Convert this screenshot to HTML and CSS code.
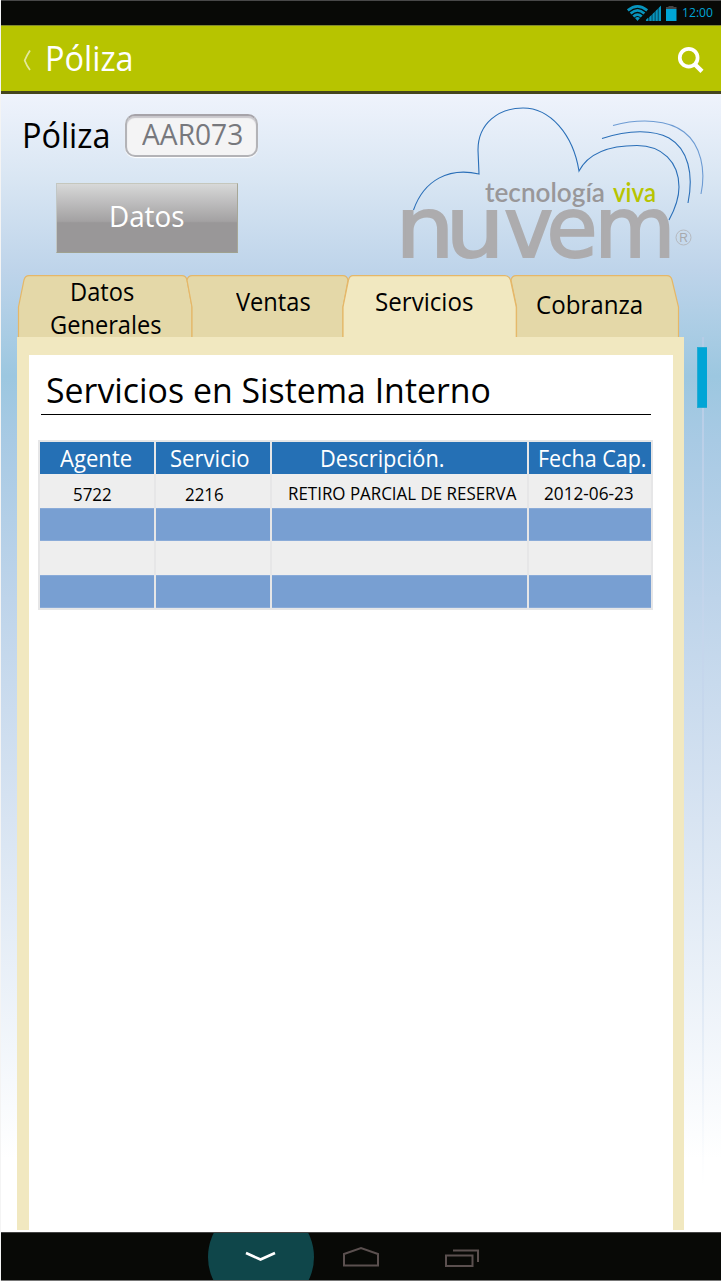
FILE: index.html
```html
<!DOCTYPE html>
<html lang="es">
<head>
<meta charset="utf-8">
<title>Póliza</title>
<link rel="stylesheet" href="styles.css">
</head>
<body>
<div class="screen">
  <header class="status">
    <svg class="status-icons" width="56" height="18" viewBox="0 0 56 18">
      <g fill="none" stroke="#0794bd" stroke-width="2.700">
        <path d="M0.8 5.4Q10.5-2.600 20.2 5.4"/>
        <path d="M3.6 8.5Q10.5 2.3 17.4 8.5"/>
        <path d="M6.3 11.5Q10.5 7.6 14.7 11.5"/>
      </g>
      <path d="M8 13Q10.5 11.2 13 13L10.5 16Z" fill="#0794bd"/>
      <path d="M18.5 16L34 .5V16Z" fill="#064d63"/>
      <path d="M19 16v-1.2l2-2V16zM22.5 16v-4l2-2v6zM25.6 16V9l2-2v9zM28.7 16V6l2-2v12zM31.8 16V3L34 .7V16z" fill="#0794bd"/>
      <path d="M41.5 1h5v2h-5zM39 2h10.500v2H39z" fill="#464646"/>
      <path d="M39 4h10.500v12H39z" fill="#00a5d6"/>
    </svg>
    <span class="txt clock">12:00</span>
  </header>
  <div class="appbar">
    <svg width="10" height="22" viewBox="0 0 10 22"><path d="M8 0.500Q5 5 2.700 10.500Q5 16.500 8 20" fill="none" stroke="#e3e89c" stroke-width="1.800"/></svg>
    <h1 class="txt app-title">Póliza</h1>
    <svg class="search" width="28" height="28" viewBox="0 0 28 28"><circle cx="11.700" cy="11.700" r="8.900" fill="none" stroke="#fff" stroke-width="3.700"/><path d="M17.500 18L25 25.300" stroke="#fff" stroke-width="4.400"/></svg>
  </div>
  <main class="content">
    <section class="summary">
      <div class="policy">
        <div class="policy-row">
          <label class="txt policy-label">Póliza</label>
          <div class="field"><span class="txt field-value">AAR073</span></div>
        </div>
        <button class="btn"><span class="txt btn-label">Datos</span></button>
      </div>
      <svg class="logo" width="310" height="165" viewBox="400 100 310 165">
        <g fill="none" stroke="#2a6fb8" stroke-width="1.100">
          <path d="M413.500 210C424 180 449 167 479 174L478 150C478 123 499 108 523 108C550 108 573 134 579 171C589 152 611 145.500 637 145.500C662 145.500 679 162 679 187C679 199 675 209 669 220"/>
          <path d="M602 138.500C630 129 654 130 669 138C688 149 694 174 688 203"/>
          <path d="M613 125.500C641 118 669 120 684 132C701 145 706 170 701 194" stroke="#6d9bd3"/>
        </g>
        <text class="tagline" x="485" y="202" textLength="120" lengthAdjust="spacingAndGlyphs">tecnología</text>
        <text class="tagline lime" x="613" y="202" textLength="43" lengthAdjust="spacingAndGlyphs">viva</text>
        <text class="brand" y="257"><tspan x="395.500" textLength="59" lengthAdjust="spacingAndGlyphs">n</tspan><tspan x="445.500" textLength="59" lengthAdjust="spacingAndGlyphs">u</tspan><tspan x="504">v</tspan><tspan x="546.500">e</tspan><tspan x="594.500">m</tspan></text>
        <circle cx="683.500" cy="237.500" r="7.500" fill="none" stroke="#b0b0b2" stroke-width=".8"/>
        <text class="reg" x="683.700" y="242">R</text>
      </svg>
    </section>
    <nav class="tabs">
      <svg class="tab-shapes" width="667" height="62" viewBox="17 275 667 62">
        <g fill="#e4d8a8" stroke="#e5b768" stroke-width="1.200">
          <path d="M18.500 338V307L24 280Q25 275.700 29 275.700H182Q186 275.700 187 280L192 307V338"/>
          <path d="M192 338V307L187 280Q188 275.700 192 275.700H343Q347 275.700 348 280L343 307V338"/>
          <path d="M516.500 338V307L511 280Q512 275.700 516 275.700H667Q671 275.700 672 280L678.500 307V338"/>
          <path fill="#f1e8c0" d="M343 338V307L348.500 280Q349.500 275.700 353 275.700H505Q509 275.700 510.500 280L516.300 307V338"/>
        </g>
      </svg>
      <a class="tab tab-general"><span class="txt">Datos</span><span class="txt">Generales</span></a>
      <a class="tab tab-sales"><span class="txt">Ventas</span></a>
      <a class="tab tab-services"><span class="txt">Servicios</span></a>
      <a class="tab tab-billing"><span class="txt">Cobranza</span></a>
    </nav>
    <div class="body-row">
      <section class="panel">
        <div class="sheet">
          <div class="heading"><h2 class="txt">Servicios en Sistema Interno</h2></div>
          <div class="table">
            <div class="row head">
              <div class="c1"><span class="txt">Agente</span></div><div class="c2"><span class="txt">Servicio</span></div><div class="c3"><span class="txt">Descripción.</span></div><div class="c4"><span class="txt">Fecha Cap.</span></div>
            </div>
            <div class="row data">
              <div class="c1"><span class="txt">5722</span></div><div class="c2"><span class="txt">2216</span></div><div class="c3"><span class="txt">RETIRO PARCIAL DE RESERVA</span></div><div class="c4"><span class="txt">2012-06-23</span></div>
            </div>
            <div class="row blue"><div></div><div></div><div></div><div></div></div>
            <div class="row"><div></div><div></div><div></div><div></div></div>
            <div class="row blue"><div></div><div></div><div></div><div></div></div>
          </div>
        </div>
      </section>
      <div class="scroll"><div class="thumb"></div></div>
    </div>
  </main>
  <footer class="navbar">
    <div class="nav-back"><svg width="32" height="12" viewBox="0 0 32 12"><path d="M1 2L15.500 8.500L30 2" fill="none" stroke="#fff" stroke-width="2.600"/></svg></div>
    <svg class="nav-home" width="38" height="22" viewBox="0 0 38 22"><path d="M2 19.500V8L19 2L36 8V19.500Z" fill="none" stroke="#5b504f" stroke-width="2"/></svg>
    <svg class="nav-recent" width="36" height="20" viewBox="0 0 36 20"><path d="M2 7.500H28.500V18H2ZM9 2.500H34V14" fill="none" stroke="#5b504f" stroke-width="2"/></svg>
  </footer>
</div>
</body>
</html>
```
FILE: styles.css
```css
* { box-sizing: border-box; }
body { margin: 0; background: #f4f4f4; font-family: "Open Sans", "Noto Sans", sans-serif; color: #000; }
h1, h2 { margin: 0; font-weight: 400; }
svg { display: block; flex: none; }
.screen { width: 721px; height: 1281px; padding-left: 1px; display: flex; flex-direction: column; overflow: hidden; }
.txt { display: block; white-space: nowrap; transform: scaleX(.94); transform-origin: 0 50%; }

.status { height: 25px; flex: none; background: #080906; border-top: 1px solid #484848; display: flex; padding-left: 626px; }
.status-icons { margin-top: 4px; }
.clock { color: #00a5d6; font-size: 13.5px; line-height: 22px; width: 36px; margin-left: -1px; transform: scaleX(.9); }

.appbar { height: 69px; flex: none; background: #b7c400; border-top: 1px solid #81882c; border-bottom: 3px solid #45451d; display: flex; padding-left: 21px; color: #fff; }
.appbar > svg:first-child { margin-top: 24px; }
.app-title { width: 110px; margin: 8px 0 0 13px; font-size: 34.5px; line-height: 48px; }
.search { margin: 20px 16px 0 auto; }

.content { flex: 1; min-height: 0; display: flex; flex-direction: column;
  background: linear-gradient(#eff3fc 0, #d9e6f3 85px, #bed4ea 176px, #9cc7e0 282px, #a8cae4 346px, #bed4ea 505px, #d5e2f1 700px, #fff 1065px); }
.summary { height: 181px; flex: none; display: flex; justify-content: space-between; padding: 6px 11px 0 21px; }
.policy { width: 240px; }
.policy-row { display: flex; padding-top: 14px; }
.policy-label { width: 105px; margin-left: -2px; padding-left: 2px; font-size: 34.5px; line-height: 41px; }
.field { width: 133px; height: 43px; border: 2px solid #b3b3b7; border-top-color: #a6a3a9; border-radius: 10px; background: #f4f4f5; box-shadow: inset 0 2px 1px #c9c7cc, 0 1px 1px #fff; padding-left: 15px; }
.field-value { color: #77787d; font-size: 29.500px; line-height: 36px; transform: scaleX(.955); }
.btn { display: block; width: 182px; height: 70px; margin: 26px 0 0 34px; padding: 0 0 4px 52px; border: 1px solid; border-color: #c5c7bd #a7a797 #9fa18f #c2c7c5; background: linear-gradient(#d7d8d8 0, #a3a1a2 55%, #999798 57%); color: #fff; font: inherit; text-align: left; }
.btn-label { font-size: 28.500px; line-height: 62px; transform: scaleX(.975); }
.logo { overflow: visible; }
.tagline { font: 600 26.5px Lato, sans-serif; fill: #999799; }
.tagline.lime { fill: #b7c400; }
.brand { font: 83px "DejaVu Sans", sans-serif; fill: #adacae; stroke: #adacae; stroke-width: 2px; }
.reg { font: 12px "Liberation Sans", sans-serif; fill: #a7a9ad; text-anchor: middle; }

.tabs { position: relative; height: 62px; flex: none; width: 667px; margin-left: 16px; display: flex; font-size: 25px; line-height: 33px; }
.tab-shapes { position: absolute; left: 0; top: 0; }
.tab { position: relative; }
.tab .txt { transform: scaleX(.945); }
.tab-general { width: 175px; padding: 0 0 0 33px; }
.tab-general .txt:first-child { margin-left: 20px; }
.tab-sales { width: 151px; padding: 10px 0 0 44px; }
.tab-services { width: 173px; padding: 10px 0 0 32px; }
.tab-billing { padding: 13px 0 0 20px; }
.tab-services .txt, .tab-billing .txt { transform: scaleX(.965); }

.body-row { flex: 1; display: flex; padding: 0 13px 2px 16px; }
.panel { width: 667px; background: #f1e8c0; padding: 18px 11px 0 12px; }
.sheet { height: 100%; background: #fff; padding: 0 20px 0 9px; }
.heading { width: 610px; height: 60px; margin-left: 3px; border-bottom: 1px solid #000; padding: 8px 0 0 5px; }
.heading h2 { font-size: 35px; line-height: 54px; transform: scaleX(.967); }

.table { width: 615px; margin-top: 25px; border: 2px solid #e6e6e7; background: #e6e6e7; }
.row { height: 34px; display: grid; grid-template-columns: 114px 114px 255px 122px; column-gap: 2px; background: #e6e6e7; }
.row > div { background: #eee; }
.row.head { height: 32px; }
.row.blue { height: 33px; }
.row.head > div { background: #2570b5; color: #fff; font-size: 23px; line-height: 33px; }
.row.blue > div { background: #789fd2; border: solid #8aabd8; border-width: 1px 0; }
.data > div { font-size: 18px; line-height: 38px; }
.head .txt { transform: scaleX(.96); }
.head .c3 .txt { transform: scaleX(.945); }
.head .c4 .txt { transform: scaleX(.935); }
.head .c1 { padding-left: 20px; } .head .c2 { padding-left: 14px; } .head .c3 { padding-left: 48px; } .head .c4 { padding-left: 9px; }
.data .c1 { padding-left: 33px; line-height: 40px; } .data .c2 { padding-left: 29px; line-height: 40px; }
.data .c3 { padding-left: 16px; } .data .c4 { padding-left: 15px; }
.data .c4 .txt { transform: scaleX(.955); }

.scroll { width: 2px; margin: 0 0 0 18px; background: linear-gradient(#b5cce6, #c5d6ec 300px, #fff0 850px); }
.thumb { width: 10px; height: 61px; margin: 10px 0 0 -5px; background: #00a5d6; border: 1px solid #25abd3; border-right: 0; }

.navbar { height: 49px; flex: none; background: #080906; border-top: 1px solid #444; border-bottom: 1px solid #777; display: flex; padding-left: 207px; overflow: hidden; }
.nav-back { width: 106px; height: 106px; flex: none; margin-top: -29px; border-radius: 50%; background: #0f464a; display: flex; align-items: center; justify-content: center; }
.nav-home { margin: 13px 0 0 28px; }
.nav-recent { margin: 15px 0 0 64px; }
```
